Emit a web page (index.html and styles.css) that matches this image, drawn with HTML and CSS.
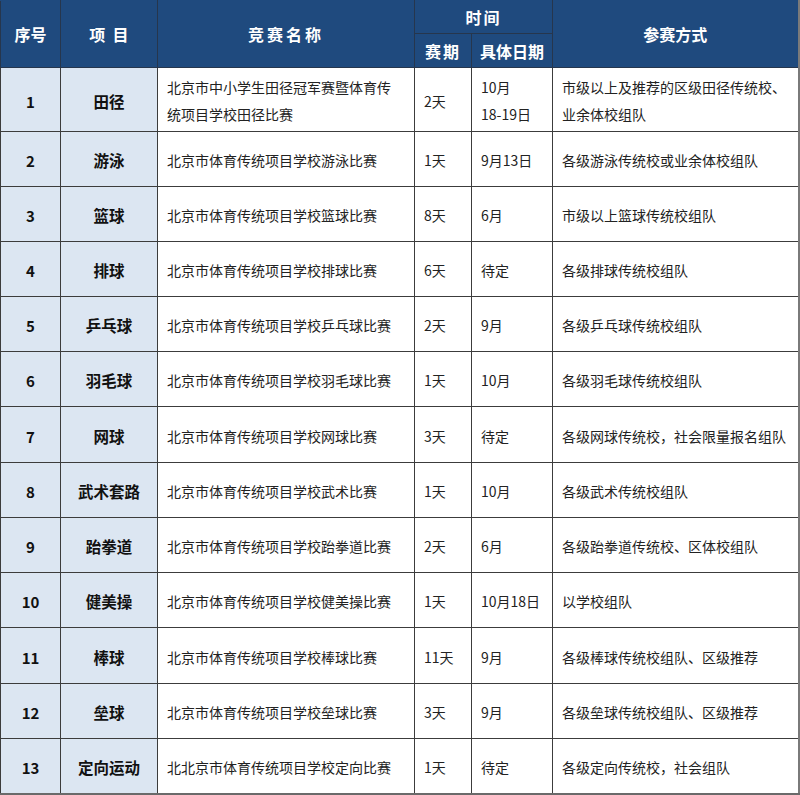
FILE: index.html
```html
<!DOCTYPE html>
<html lang="zh-CN">
<head>
<meta charset="utf-8">
<title>北京市体育传统项目学校比赛</title>
<link rel="stylesheet" href="styles.css">
</head>
<body>
<table class="sched">
  <colgroup>
    <col class="c-no"><col class="c-item"><col class="c-name"><col class="c-days"><col class="c-date"><col class="c-way">
  </colgroup>
  <thead>
    <tr class="h1">
      <th rowspan="2">序号</th>
      <th rowspan="2" class="sp-item">项&nbsp;&nbsp;目</th>
      <th rowspan="2" class="sp-wide">竞赛名称</th>
      <th colspan="2" class="sp-mid">时间</th>
      <th rowspan="2">参赛方式</th>
    </tr>
    <tr class="h2">
      <th class="sp-mid">赛期</th>
      <th>具体日期</th>
    </tr>
  </thead>
  <tbody>
    <tr class="tall"><td class="no">1</td><td class="item">田径</td><td class="txt name">北京市中小学生田径冠军赛暨体育传统项目学校田径比赛</td><td class="txt">2天</td><td class="txt">10月<br>18-19日</td><td class="txt">市级以上及推荐的区级田径传统校、业余体校组队</td></tr>
    <tr><td class="no">2</td><td class="item">游泳</td><td class="txt name">北京市体育传统项目学校游泳比赛</td><td class="txt">1天</td><td class="txt">9月13日</td><td class="txt">各级游泳传统校或业余体校组队</td></tr>
    <tr><td class="no">3</td><td class="item">篮球</td><td class="txt name">北京市体育传统项目学校篮球比赛</td><td class="txt">8天</td><td class="txt">6月</td><td class="txt">市级以上篮球传统校组队</td></tr>
    <tr><td class="no">4</td><td class="item">排球</td><td class="txt name">北京市体育传统项目学校排球比赛</td><td class="txt">6天</td><td class="txt">待定</td><td class="txt">各级排球传统校组队</td></tr>
    <tr><td class="no">5</td><td class="item">乒乓球</td><td class="txt name">北京市体育传统项目学校乒乓球比赛</td><td class="txt">2天</td><td class="txt">9月</td><td class="txt">各级乒乓球传统校组队</td></tr>
    <tr><td class="no">6</td><td class="item">羽毛球</td><td class="txt name">北京市体育传统项目学校羽毛球比赛</td><td class="txt">1天</td><td class="txt">10月</td><td class="txt">各级羽毛球传统校组队</td></tr>
    <tr class="plus"><td class="no">7</td><td class="item">网球</td><td class="txt name">北京市体育传统项目学校网球比赛</td><td class="txt">3天</td><td class="txt">待定</td><td class="txt">各级网球传统校，社会限量报名组队</td></tr>
    <tr><td class="no">8</td><td class="item">武术套路</td><td class="txt name">北京市体育传统项目学校武术比赛</td><td class="txt">1天</td><td class="txt">10月</td><td class="txt">各级武术传统校组队</td></tr>
    <tr><td class="no">9</td><td class="item">跆拳道</td><td class="txt name">北京市体育传统项目学校跆拳道比赛</td><td class="txt">2天</td><td class="txt">6月</td><td class="txt">各级跆拳道传统校、区体校组队</td></tr>
    <tr><td class="no">10</td><td class="item">健美操</td><td class="txt name">北京市体育传统项目学校健美操比赛</td><td class="txt">1天</td><td class="txt">10月18日</td><td class="txt">以学校组队</td></tr>
    <tr class="plus"><td class="no">11</td><td class="item">棒球</td><td class="txt name">北京市体育传统项目学校棒球比赛</td><td class="txt">11天</td><td class="txt">9月</td><td class="txt">各级棒球传统校组队、区级推荐</td></tr>
    <tr><td class="no">12</td><td class="item">垒球</td><td class="txt name">北京市体育传统项目学校垒球比赛</td><td class="txt">3天</td><td class="txt">9月</td><td class="txt">各级垒球传统校组队、区级推荐</td></tr>
    <tr><td class="no">13</td><td class="item">定向运动</td><td class="txt name">北北京市体育传统项目学校定向比赛</td><td class="txt">1天</td><td class="txt">待定</td><td class="txt">各级定向传统校，社会组队</td></tr>
  </tbody>
</table>
</body>
</html>
```
FILE: styles.css
```css
html, body {
  margin: 0;
  padding: 0;
  background: #ffffff;
}
body {
  font-family: "Noto Sans CJK SC", "Noto Sans", sans-serif;
  color: #1a1a1a;
}
.sched {
  border-collapse: collapse;
  table-layout: fixed;
  width: 798px;
  border-right: 2px solid #7a7a7a;
  border-bottom: 2px solid #6a6a6a;
}
.c-no { width: 60px; }
.c-item { width: 97px; }
.c-name { width: 257px; }
.c-days { width: 57px; }
.c-date { width: 81px; }
.c-way { width: 246px; }

.sched th {
  background: #1f4a7e;
  color: #ffffff;
  font-weight: 700;
  font-size: 16px;
  line-height: 20px;
  text-align: center;
  vertical-align: middle;
  padding: 0;
  border: 1px solid #26364d;
}
.sched thead tr.h1 th { border-top-color: #1f4a7e; }
.sched tr.h1 { height: 33px; }
.sched tr.h2 { height: 34px; }
.sp-wide { letter-spacing: 3px; }
.sp-mid { letter-spacing: 2px; }
.sp-item { letter-spacing: 0; }

.sched td {
  border: 1px solid #3c3c3c;
  vertical-align: middle;
  padding: 3px 6px 0 9px;
  font-size: 14px;
  line-height: 27px;
  height: 52px;
  box-sizing: border-box;
}
.sched td.name { padding-right: 14px; }
.sched tbody tr { height: 55px; }
.sched tbody tr.plus { height: 56px; }
.sched tbody tr.tall { height: 64px; }
.sched td.no,
.sched td.item {
  background: #dce6f2;
  text-align: center;
  font-weight: 700;
  font-size: 15px;
  padding-left: 0;
  padding-right: 0;
  color: #111;
}
.sched td.item { font-size: 15.5px; }
.sched td.txt { color: #222; }
```
